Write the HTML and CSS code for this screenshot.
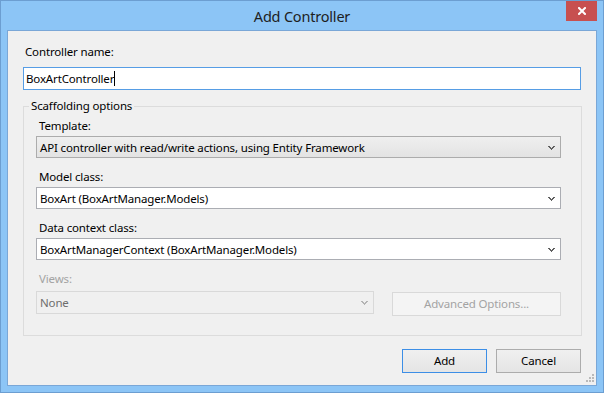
FILE: index.html
```html
<!DOCTYPE html>
<html>
<head>
<meta charset="utf-8">
<link rel="stylesheet" href="styles.css">
</head>
<body>
<div class="window">
  <div class="titlebar">
    <span class="title">Add Controller</span>
    <div class="close"><svg width="8" height="8" viewBox="0 0 8 8"><path d="M1 1L7 7M7 1L1 7" stroke="#fff" stroke-width="2" stroke-linecap="square"/></svg></div>
  </div>
  <div class="client">
    <div class="label first">Controller name:</div>
    <div class="textbox"><span>BoxArtController</span><span class="caret"></span></div>
    <fieldset class="group">
      <legend>Scaffolding options</legend>
      <div class="field">
        <div class="label">Template:</div>
        <div class="combo combo-btn"><span>API controller with read/write actions, using Entity Framework</span><svg class="chev" width="7" height="4" viewBox="0 0 7 4" shape-rendering="crispEdges"><path d="M0 0h2v1h-2zM5 0h2v1h-2zM1 1h2v1h-2zM4 1h2v1h-2zM2 2h3v1h-3zM3 3h1v1h-1z" fill="#606060"/></svg></div>
      </div>
      <div class="field">
        <div class="label">Model class:</div>
        <div class="combo"><span>BoxArt (BoxArtManager.Models)</span><svg class="chev" width="7" height="4" viewBox="0 0 7 4" shape-rendering="crispEdges"><path d="M0 0h2v1h-2zM5 0h2v1h-2zM1 1h2v1h-2zM4 1h2v1h-2zM2 2h3v1h-3zM3 3h1v1h-1z" fill="#606060"/></svg></div>
      </div>
      <div class="field">
        <div class="label">Data context class:</div>
        <div class="combo"><span>BoxArtManagerContext (BoxArtManager.Models)</span><svg class="chev" width="7" height="4" viewBox="0 0 7 4" shape-rendering="crispEdges"><path d="M0 0h2v1h-2zM5 0h2v1h-2zM1 1h2v1h-2zM4 1h2v1h-2zM2 2h3v1h-3zM3 3h1v1h-1z" fill="#606060"/></svg></div>
      </div>
      <div class="field views">
        <div class="label disabled">Views:</div>
        <div class="views-row">
          <div class="combo combo-disabled"><span>None</span><svg class="chev" width="7" height="4" viewBox="0 0 7 4" shape-rendering="crispEdges"><path d="M0 0h2v1h-2zM5 0h2v1h-2zM1 1h2v1h-2zM4 1h2v1h-2zM2 2h3v1h-3zM3 3h1v1h-1z" fill="#b4b4b4"/></svg></div>
          <div class="btn btn-disabled">Advanced Options...</div>
        </div>
      </div>
    </fieldset>
    <div class="actions">
      <div class="btn btn-default">Add</div>
      <div class="btn">Cancel</div>
    </div>
    <svg class="grip" width="8" height="8" viewBox="0 0 8 8" shape-rendering="crispEdges"><path d="M6 0h2v2h-2zM3 3h2v2h-2zM6 3h2v2h-2zM0 6h2v2h-2zM3 6h2v2h-2zM6 6h2v2h-2z" fill="#b9b9b9"/></svg>
  </div>
</div>
</body>
</html>
```
FILE: styles.css
```css
* { box-sizing: border-box; }
html, body { margin: 0; padding: 0; }
body {
  font-family: "Noto Sans", "Open Sans", sans-serif;
  font-size: 11.5px;
  letter-spacing: -0.15px;
  color: #000;
  width: 604px;
  height: 393px;
  overflow: hidden;
}
.window {
  width: 604px;
  height: 393px;
  background: #8cc5f6;
  border: 1px solid #6c9ed1;
  display: flex;
  flex-direction: column;
  position: relative;
}
.titlebar {
  height: 29px;
  flex: none;
  display: flex;
  align-items: center;
  justify-content: center;
}
.title {
  font-size: 14.5px;
  letter-spacing: -0.2px;
  line-height: 20px;
  color: #1e1e1e;
  margin-top: 1px;
}
.close {
  position: absolute;
  top: 0;
  right: 6px;
  width: 31px;
  height: 20px;
  background: #c75050;
  display: flex;
  align-items: center;
  justify-content: center;
}
.client {
  flex: 1;
  margin: 0 6px 6px;
  background: #f0f0f0;
  border: 1px solid #7aa7d7;
  padding: 13px 15px 0;
  position: relative;
  display: flex;
  flex-direction: column;
}
.label {
  line-height: 16px;
  height: 16px;
  white-space: nowrap;
}
.label.first { padding-left: 2px; }
.label.disabled { color: #a3a3a3; }
.textbox {
  margin-top: 7px;
  height: 23px;
  border: 1px solid #569de5;
  background: #fff;
  padding-left: 2px;
  display: flex;
  align-items: center;
  line-height: 16px;
}
.caret {
  width: 1px;
  height: 15px;
  background: #000;
}
.group {
  margin: 8px -1px 0 0;
  padding: 4px 20px 19px 12px;
  border: 1px solid #dcdcdc;
  min-width: 0;
  display: flex;
  flex-direction: column;
  gap: 11px;
}
.group legend {
  padding: 0 2px;
  margin-left: -7px;
  line-height: 16px;
}
.field .label { margin-bottom: 2px; padding-left: 3px; }
.field.views .label { margin-bottom: 4px; }
.combo {
  height: 22px;
  border: 1px solid #abadb3;
  background: #fff;
  display: flex;
  align-items: center;
  justify-content: space-between;
  padding: 0 5px 0 3px;
  white-space: nowrap;
}
.combo-btn {
  border-color: #acacac;
  background: linear-gradient(#efefef, #e3e3e3);
}
.chev { flex: none; margin-top: 1px; }
.views-row {
  display: flex;
  align-items: flex-start;
  gap: 18px;
}
.combo-disabled {
  width: 338px;
  height: 23px;
  border-color: #d9d9d9;
  background: #f0f0f0;
  color: #6d6d6d;
}
.btn {
  height: 24px;
  width: 85px;
  border: 1px solid #acacac;
  background: linear-gradient(#f0f0f0, #e5e5e5);
  display: flex;
  align-items: center;
  justify-content: center;
  line-height: 16px;
}
.btn-disabled {
  width: 169px;
  margin-top: 1px;
  border-color: #d9d9d9;
  background: #f4f4f4;
  color: #a3a3a3;
}
.btn-default { border-color: #3c8ee6; }
.actions {
  margin-top: 13px;
  display: flex;
  justify-content: flex-end;
  gap: 9px;
}
.grip {
  position: absolute;
  right: 2px;
  bottom: 3px;
}
```
